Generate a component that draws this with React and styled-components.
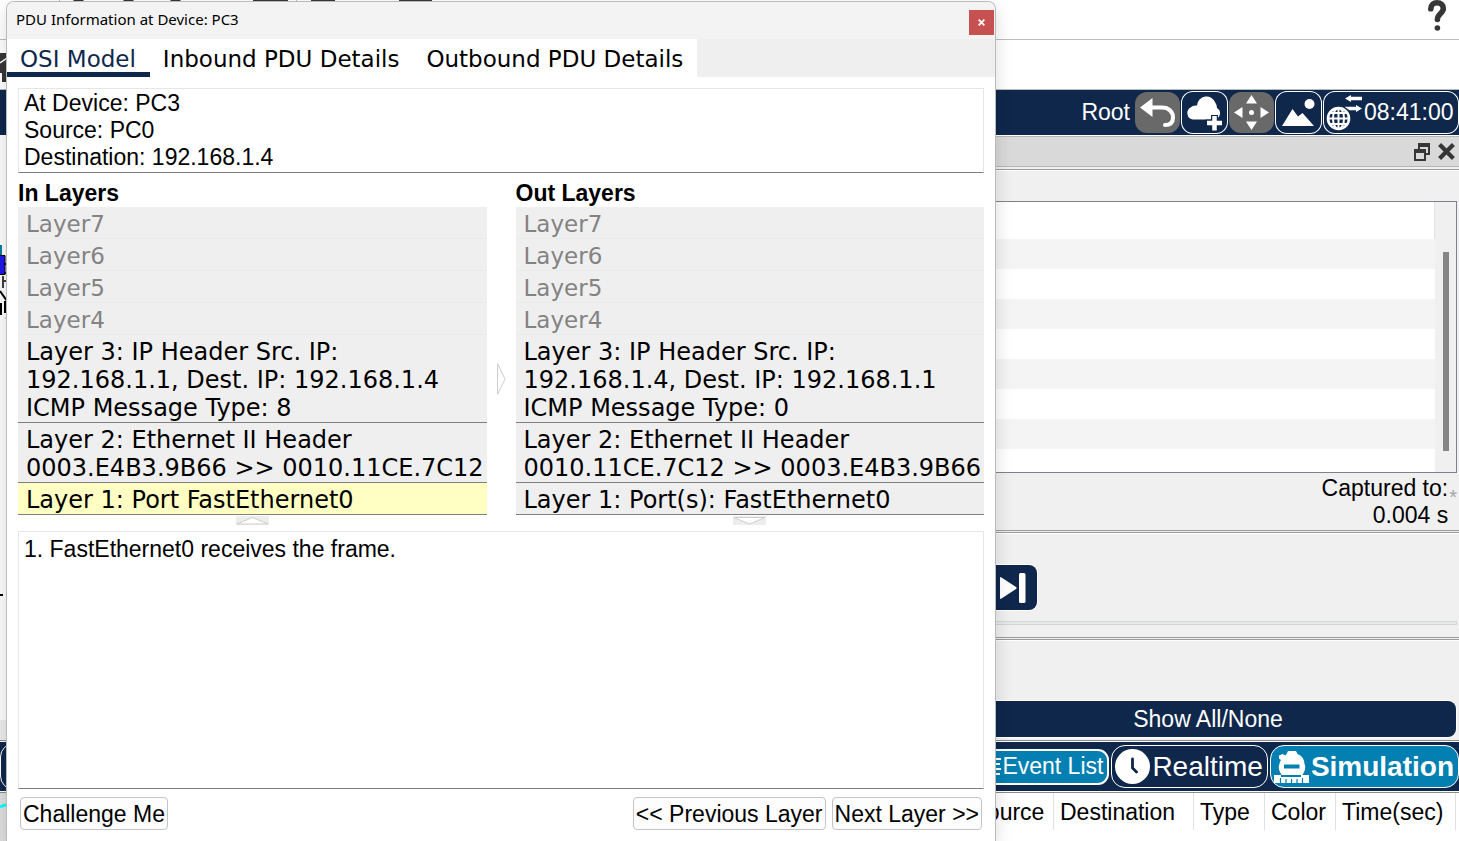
import React from 'react';
import styled, { createGlobalStyle } from 'styled-components';

const navy = '#0f274b';
const teal = '#037fb1';
const ink = '#363636';

const GlobalStyle = createGlobalStyle`
  * { box-sizing: border-box; }
  body { margin: 0; background: #fff; color: #000; font: 23px/27px "Liberation Sans", Arial, sans-serif; }
  button { font: inherit; color: inherit; padding: 0; margin: 0; border: 0; background: none; cursor: pointer; white-space: nowrap; }
  svg { display: block; flex: none; }
`;

/* ---------- main window ---------- */

const Desktop = styled.div`
  position: relative;
  display: flex;
  flex-direction: column;
  min-height: 100vh;
  overflow: hidden;
`;

const MainToolbar = styled.header`
  display: flex;
  align-items: flex-start;
  justify-content: space-between;
  height: 40px;
  padding: 0 12px 0 59px;
  border-bottom: 1px solid #bcbebd;
`;

const SecondToolbar = styled.div`
  height: 50px;
  padding-top: 12px;
  border-bottom: 1px solid #b5bdbb;
`;

const NavBar = styled.nav`
  display: flex;
  align-items: center;
  justify-content: flex-end;
  gap: 1px;
  height: 45px;
  background: ${navy};
  color: #fff;
`;

const NavLabel = styled.span`
  margin-right: 4px;
`;

const NavButton = styled.button`
  display: flex;
  align-items: center;
  justify-content: center;
  height: ${p => (p.$muted ? 41 : 43)}px;
  width: ${p => (p.$muted ? 45 : 47)}px;
  border-radius: 12px;
  background: ${p => (p.$muted ? '#696969' : navy)};
  box-shadow: ${p => (p.$muted ? 'none' : 'inset 0 0 0 1px #fff')};
`;

const ClockButton = styled(NavButton)`
  width: 136px;
  justify-content: flex-start;
`;

const Workspace = styled.div`
  display: flex;
  flex: 1;
`;

const Canvas = styled.main`
  display: flex;
  flex-direction: column;
  flex: 1;
  background: #fcfcfc;
`;

const CanvasDrawing = styled.div`
  flex: 1;
  padding-top: 110px;
`;

const CanvasScroll = styled.div`
  height: 20px;
  background: #ececec;
`;

const SimPanel = styled.aside`
  display: flex;
  flex-direction: column;
  width: 502px;
  background: #f0f0f0;
  border-top: 1px solid #fff;
`;

const PanelTitle = styled.div`
  display: flex;
  align-items: center;
  justify-content: flex-end;
  gap: 8px;
  height: 31px;
  padding-right: 4px;
  background: #d9d9d9;
  border-top: 1px solid #b5b5b5;
  border-bottom: 1px solid #b5b5b5;
`;

const Divider = styled.div`
  height: 4px;
  border-top: 1px solid #9b9b9b;
  border-bottom: 1px solid #fff;
  background: linear-gradient(#f0f0f0 1px, #9b9b9b 1px);
`;

const TitleDivider = styled.div`
  height: 4px;
  border-bottom: 1px solid #fff;
  background: linear-gradient(#f0f0f0 2px, #9b9b9b 2px);
`;

const EventBox = styled.div`
  display: flex;
  height: 272px;
  margin: 30px 2px 0 0;
  border: 1px solid #7d828c;
`;

const EventRows = styled.div`
  flex: 1;
  display: flex;
  flex-direction: column;
  overflow: hidden;
  background: #fff;
`;

const EventHead = styled.div`
  flex: none;
  height: 37px;
  border-right: 1px solid #e2e2e2;
`;

const EventRow = styled.div`
  flex: none;
  height: 30px;
  background: ${p => (p.$odd ? '#f4f4f4' : '#fff')};
`;

const ScrollTrack = styled.div`
  width: 21px;
  padding: 50px 7px 0 8px;
  background: #f0f0f0;
`;

const ScrollThumb = styled.div`
  height: 199px;
  background: #868686;
`;

const Captured = styled.div`
  display: flex;
  justify-content: flex-end;
  align-items: center;
  gap: 1px;
  height: 57px;
  padding: 1px 2px 0 0;
  text-align: right;
`;

const Star = styled.span`
  padding-bottom: 10px;
  color: #a5a5a5;
  font-size: 20px;
  line-height: 20px;
`;

const Controls = styled.div`
  display: flex;
  flex-direction: column;
  height: 103px;
  padding: 31px 2px 0 23px;
`;

const StepButton = styled.button`
  display: flex;
  align-items: center;
  justify-content: flex-end;
  width: 57px;
  height: 45px;
  padding-right: 11px;
  border-radius: 8px;
  background: ${navy};
  box-shadow: 0 0 0 1px #fff;
`;

const ProgressTrack = styled.div`
  height: 4px;
  margin-top: 11px;
  border: 1px solid #d0d6d4;
  background: #e6eae9;
`;

const Filters = styled.div`
  display: flex;
  flex-direction: column;
  justify-content: flex-end;
  flex: 1;
  padding: 0 3px 3px;
`;

const ShowAll = styled.button`
  height: 36px;
  border-radius: 8px;
  background: ${navy};
  color: #fff;
  box-shadow: 0 0 0 1px #fff;
`;

const ModeBar = styled.div`
  display: flex;
  align-items: center;
  justify-content: flex-end;
  gap: 2px;
  height: 53px;
  border-top: 1px solid #8c8c8c;
  border-bottom: 1px solid #8c8c8c;
  background: ${navy};
  box-shadow: inset 0 1px #fff, inset 0 -1px #fff;
  color: #fff;
`;

const ModeButton = styled.button`
  display: flex;
  align-items: center;
  gap: 2px;
  height: 43px;
  padding: 0 4px 0 3px;
  border: 1px solid #fff;
  border-radius: 14px;
  background: ${p => (p.$active ? teal : navy)};
  font-size: 28px;
  font-weight: ${p => (p.$active ? 'bold' : 'normal')};
  line-height: 36px;
`;

const TimeButton = styled(ModeButton)`
  width: 120px;
  height: 47px;
  margin-right: auto;
`;

const EventListButton = styled.button`
  display: flex;
  align-items: center;
  gap: 1px;
  height: 36px;
  padding: 0 4px;
  border: 2px solid #fff;
  border-radius: 11px;
  background: ${teal};
`;

const PduArea = styled.div`
  display: flex;
  justify-content: space-between;
  height: 48px;
  background: linear-gradient(90deg, #dedede 10px, #fff 10px);
`;

const PduTable = styled.table`
  height: 37px;
  width: 490px;
  table-layout: fixed;
  border-collapse: collapse;
  margin-right: 3px;
  th {
    padding: 1px 0 0 6px;
    height: 37px;
    font-weight: normal;
    text-align: left;
    border-right: 1px solid #e0e0e0;
  }
`;

const HeadCell = styled.th`
  width: ${p => p.$w}px;
`;

/* ---------- dialog ---------- */

const Dialog = styled.section`
  position: absolute;
  top: 1px;
  bottom: 0;
  left: 6px;
  right: 463px;
  display: flex;
  flex-direction: column;
  border: 1px solid #b9bbba;
  border-bottom: 0;
  border-radius: 8px 8px 0 0;
  background: #fff;
  box-shadow: 0 6px 18px rgba(0, 0, 0, 0.14);
`;

const TitleBar = styled.header`
  display: flex;
  align-items: center;
  justify-content: space-between;
  height: 37px;
  padding: 0 1px 0 9px;
  border-radius: 7px 7px 0 0;
  background: #f3f3f3;
`;

const DialogTitle = styled.h1`
  margin: 0;
  padding-bottom: 3px;
  font: 15px/20px "Noto Sans", "Open Sans", sans-serif;
`;

const CloseButton = styled.button`
  display: flex;
  align-items: center;
  justify-content: center;
  width: 25px;
  height: 25px;
  margin-top: 3px;
  background: #c75050;
`;

const Tabs = styled.div`
  display: flex;
  height: 38px;
  background: #efefef;
`;

const Tab = styled.button`
  height: 38px;
  padding: 7px 14px 0 13px;
  background: #fff;
  border-bottom: 5px solid ${p => (p.$active ? navy : '#fff')};
  color: ${p => (p.$active ? navy : '#000')};
  font: 23px/26px "DejaVu Sans", Verdana, sans-serif;
`;

const DialogBody = styled.div`
  display: flex;
  flex-direction: column;
  flex: 1;
  padding: 11px;
`;

const TextPanel = styled.div`
  flex: ${p => (p.$grow ? 1 : 'none')};
  padding: ${p => (p.$grow ? 4 : 1)}px 5px;
  border: 1px solid #e6e6e6;
  border-bottom-color: #7f7f7f;
`;

const LayerGrid = styled.div`
  display: grid;
  grid-template-columns: 1fr 29px 1fr;
  padding-top: 7px;
`;

const LayerHeading = styled.h2`
  margin: 0;
  font-size: 23px;
  line-height: 27px;
`;

const LayerButton = styled.button`
  display: block;
  width: 100%;
  padding: 3px 0 0 8px;
  border-bottom: 1px solid ${p => (p.disabled ? '#eaeaea' : '#7f7f7f')};
  background: ${p => (p.$selected ? '#ffffc3' : '#efefef')};
  color: ${p => (p.disabled ? '#838383' : '#000')};
  font: ${p => (p.disabled ? 23 : 24)}px/28px "DejaVu Sans", Verdana, sans-serif;
  text-align: left;
  white-space: pre;
`;

const ArrowCell = styled.div`
  display: flex;
  align-items: center;
  justify-content: center;
  padding-top: 47px;
`;

const Handle = styled.div`
  display: flex;
  justify-content: center;
  height: 16px;
  padding-top: 1px;
`;

const Footer = styled.footer`
  display: flex;
  gap: 6px;
  padding: 8px 2px 0;
`;

const DialogButton = styled.button`
  height: 33px;
  padding: 1px 2px 0;
  margin-right: ${p => (p.$push ? 'auto' : '0')};
  border: 1px solid #c4c4c4;
  border-radius: 4px;
  background: #fdfdfd;
`;

/* ---------- icons ---------- */

const ToolbarIcons = () => (
  <svg width="400" height="2" viewBox="59 0 400 2" aria-hidden="true">
    <g fill={ink}>
      <path d="M74 0h9l2 2H72zM124 0h9l2 2h-13zM171 0h9l2 2h-13z" />
      <path d="M253 0h35v2h-35zM311 0h24v2h-24zM399 0h33v2h-33z" />
      <path d="M59 0h1v2h-1zM296 0h1v2h-1z" fill="#bbb" />
    </g>
  </svg>
);

const HelpIcon = () => (
  <svg width="20" height="32" viewBox="0 0 20 32" fill="none" stroke={ink} strokeWidth="5.6" aria-hidden="true">
    <path d="M3.800 8.800C4 5 6.600 2.800 10 2.800C13.800 2.800 16.300 5.200 16.300 8.500C16.300 13.500 10.400 13.500 10.400 19.500" strokeLinecap="round" />
    <circle cx="10.400" cy="28" r="2.800" fill={ink} stroke="none" />
  </svg>
);

const SelectToolIcon = () => (
  <svg width="7" height="31" viewBox="0 0 7 31" aria-hidden="true">
    <path d="M0 1h7v29H2v-9H0z" fill={ink} />
    <path d="M0 11l7-5" stroke="#fff" strokeWidth="1.500" />
  </svg>
);

const UndoIcon = () => (
  <svg width="45" height="41" viewBox="0 0 45 41" aria-hidden="true">
    <path d="M5 15.500L17.500 6v19z" fill="#fff" />
    <path d="M16 15.500H27C34 15.500 38 20 38 25.500C38 30.500 35 33 30 33" fill="none" stroke="#fff" strokeWidth="4" strokeLinecap="round" />
  </svg>
);

const CloudIcon = () => (
  <svg width="47" height="43" viewBox="0 0 47 43" fill="#fff" aria-hidden="true">
    <path d="M12 28.500A6.500 6.500 0 0 1 9.500 16.500Q12 14 16 14.500A9.500 9.500 0 0 1 34.500 12Q36 14 36 17Q39.500 19 39 23Q38 28 33 28.500z" />
    <path d="M33.500 24v17M24.500 32h18" stroke={navy} strokeWidth="7" />
    <path d="M33.500 25v14.500M26 32h15" stroke="#fff" strokeWidth="4.500" />
  </svg>
);

const MoveIcon = () => (
  <svg width="45" height="41" viewBox="0 0 45 41" fill="#fff" aria-hidden="true">
    <path d="M22.500 3l5.500 8.500H17zM22.500 38l5.500-8.500H17zM5 20.500l8.500-5.500v11zM40 20.500l-8.500-5.500v11z" />
    <circle cx="22.500" cy="20.500" r="2.500" />
  </svg>
);

const ImageIcon = () => (
  <svg width="47" height="43" viewBox="0 0 47 43" fill="#fff" aria-hidden="true">
    <path d="M7 35L17.500 18L23 25.500L27.500 22L39 35z" />
    <circle cx="34.500" cy="13" r="5" />
  </svg>
);

const GlobeIcon = () => (
  <svg width="41" height="43" viewBox="0 0 41 43" aria-hidden="true">
    <circle cx="15.500" cy="27.500" r="10.500" fill="none" stroke="#fff" strokeWidth="2.600" />
    <g fill="none" stroke="#fff" strokeWidth="2">
      <path d="M7 22h17M5 27.500h21M7 33h17M15.500 17v21" />
      <ellipse cx="15.500" cy="27.500" rx="5.500" ry="10.500" />
    </g>
    <path d="M22 7.500L28 4v1.700h11v3.600H28V11zM39 17.500L33 14v1.700H21.500l5 3.600H33V21z" fill="#fff" />
  </svg>
);

const RestoreIcon = () => (
  <svg width="16" height="18" viewBox="0 0 16 18" fill="none" stroke={ink} aria-hidden="true">
    <path d="M5 6V1h10v10H12M1 8h10v9H1z" strokeWidth="2" />
    <path d="M4 2h12M0 8h12" strokeWidth="4" />
  </svg>
);

const CrossIcon = ({ size, width, color }) => (
  <svg width={size} height={size} viewBox="0 0 16 16" aria-hidden="true">
    <path d="M1.500 1.500l13 13M14.500 1.500l-13 13" stroke={color} strokeWidth={width} />
  </svg>
);

const StepIcon = () => (
  <svg width="29" height="32" viewBox="0 0 29 32" fill="#fff" aria-hidden="true">
    <path d="M3 6q0-1.500 1.500-.5L19 15q1.500 1 0 2L4.500 26.500q-1.500 1-1.500-.5z" />
    <rect x="22" y="1" width="6.500" height="30" rx="1.500" />
  </svg>
);

const ListIcon = () => (
  <svg width="22" height="22" viewBox="0 0 22 22" stroke="#fff" strokeWidth="2" aria-hidden="true">
    <path d="M1 3h3M7 3h15M1 8h3M7 8h14M1 13h3M7 13h15M1 18h3M7 18h14" />
  </svg>
);

const RealtimeIcon = () => (
  <svg width="35" height="35" viewBox="0 0 35 35" aria-hidden="true">
    <circle cx="17.500" cy="17.500" r="17.500" fill="#fff" />
    <path d="M17.500 10v9l4 4" fill="none" stroke={navy} strokeWidth="2.800" strokeLinecap="round" />
  </svg>
);

const SimulationIcon = () => (
  <svg width="35" height="32" viewBox="0 0 35 32" fill="#fff" aria-hidden="true">
    <path d="M14 0h8l1.500 3Q30 5.500 30.500 13q1.500 3 0 7l-2 4H7.500l-2-4q-1.500-4 0-7Q5.500 11 7 9L5 7.500V4.500L8.500 3l3 1.500L12.500 3z" />
    <path d="M0 24h7v2h20v-2h8v8H0z" />
    <path d="M10 13.500h15.500v4H10z" fill={teal} />
    <path d="M6.500 27v5M12 28v4M17.500 28v4M23 28v4M28.500 27v5" stroke={teal} strokeWidth="1.200" />
  </svg>
);

const CanvasIcon = () => (
  <svg width="7" height="355" viewBox="0 245 7 355" aria-hidden="true">
    <path d="M0 245h2v10H0z" fill="#047d9c" />
    <path d="M-1 255.500h6v19h-6z" fill="#2018ea" stroke="#000" />
    <path d="M4 264h3M4 273h3M4 281h3M3 276v12" stroke="#000" strokeWidth="1.500" fill="none" />
    <path d="M0 291l7 10M1 303v12M5 301v12" stroke="#000" strokeWidth="2" fill="none" />
    <path d="M5 318h2" stroke="#74b86a" />
    <path d="M0 595h3" stroke="#000" strokeWidth="2" />
  </svg>
);

const RightArrow = () => (
  <svg width="10" height="34" viewBox="0 0 10 34" fill="#fff" stroke="#cfcfcf" aria-hidden="true">
    <path d="M1.500 1.500v31L9 17z" />
  </svg>
);

const HandleIcon = ({ down }) => (
  <svg width="33" height="9" viewBox="0 0 33 9" aria-hidden="true">
    <path d="M0 0h33v9H0z" fill="#ededed" />
    <path d={down ? 'M1 1.500h31L16.500 8z' : 'M1 8h31L16.500 1.500z'} fill="#fff" stroke="#cfcfcf" />
  </svg>
);

const BottomStroke = () => (
  <svg width="7" height="20" viewBox="0 0 7 20" aria-hidden="true">
    <path d="M0 14q3-2 7-2" stroke="#0ff" strokeWidth="3" fill="none" />
  </svg>
);

/* ---------- data ---------- */

const upper = ['Layer7', 'Layer6', 'Layer5', 'Layer4'];

const inLayers = [
  'Layer 3: IP Header Src. IP:\n192.168.1.1, Dest. IP: 192.168.1.4\nICMP Message Type: 8',
  'Layer 2: Ethernet II Header\n0003.E4B3.9B66 >> 0010.11CE.7C12',
  'Layer 1: Port FastEthernet0',
];

const outLayers = [
  'Layer 3: IP Header Src. IP:\n192.168.1.4, Dest. IP: 192.168.1.1\nICMP Message Type: 0',
  'Layer 2: Ethernet II Header\n0010.11CE.7C12 >> 0003.E4B3.9B66',
  'Layer 1: Port(s): FastEthernet0',
];

const LayerColumn = ({ title, layers, selected, down }) => (
  <div>
    <LayerHeading>{title}</LayerHeading>
    {upper.map(name => <LayerButton key={name} disabled>{name}</LayerButton>)}
    {layers.map((text, i) => <LayerButton key={text} $selected={i === selected}>{text}</LayerButton>)}
    <Handle><HandleIcon down={down} /></Handle>
  </div>
);

export default function App() {
  return (
    <Desktop>
      <GlobalStyle />
      <MainToolbar>
        <ToolbarIcons />
        <button aria-label="Help"><HelpIcon /></button>
      </MainToolbar>
      <SecondToolbar><SelectToolIcon /></SecondToolbar>
      <NavBar>
        <NavLabel>Root</NavLabel>
        <NavButton $muted aria-label="Back"><UndoIcon /></NavButton>
        <NavButton aria-label="New cluster"><CloudIcon /></NavButton>
        <NavButton $muted aria-label="Move object"><MoveIcon /></NavButton>
        <NavButton aria-label="Set background"><ImageIcon /></NavButton>
        <ClockButton><GlobeIcon />08:41:00</ClockButton>
      </NavBar>
      <Workspace>
        <Canvas>
          <CanvasDrawing><CanvasIcon /></CanvasDrawing>
          <CanvasScroll />
        </Canvas>
        <SimPanel>
          <PanelTitle>
            <button aria-label="Undock"><RestoreIcon /></button>
            <button aria-label="Close panel"><CrossIcon size={17} width={4} color={ink} /></button>
          </PanelTitle>
          <TitleDivider />
          <EventBox>
            <EventRows>
              <EventHead />
              {[1, 2, 3, 4, 5, 6, 7, 8].map(n => <EventRow key={n} $odd={n % 2 === 1} />)}
            </EventRows>
            <ScrollTrack><ScrollThumb /></ScrollTrack>
          </EventBox>
          <Captured>
            <span>Captured to:<br />0.004 s</span>
            <Star>*</Star>
          </Captured>
          <Divider />
          <Controls>
            <StepButton aria-label="Capture then forward"><StepIcon /></StepButton>
            <ProgressTrack />
          </Controls>
          <Divider />
          <Filters><ShowAll>Show All/None</ShowAll></Filters>
        </SimPanel>
      </Workspace>
      <ModeBar>
        <TimeButton aria-label="Time" />
        <EventListButton><ListIcon />Event List</EventListButton>
        <ModeButton><RealtimeIcon />Realtime</ModeButton>
        <ModeButton $active><SimulationIcon />Simulation</ModeButton>
      </ModeBar>
      <PduArea>
        <BottomStroke />
        <PduTable>
          <thead>
            <tr>
              <HeadCell $w={88}>Source</HeadCell>
              <HeadCell $w={140}>Destination</HeadCell>
              <HeadCell $w={71}>Type</HeadCell>
              <HeadCell $w={71}>Color</HeadCell>
              <HeadCell $w={120}>Time(sec)</HeadCell>
            </tr>
          </thead>
        </PduTable>
      </PduArea>

      <Dialog role="dialog" aria-label="PDU Information">
        <TitleBar>
          <DialogTitle>PDU Information at Device: PC3</DialogTitle>
          <CloseButton aria-label="Close"><CrossIcon size={7} width={4} color="#fff" /></CloseButton>
        </TitleBar>
        <Tabs role="tablist">
          <Tab role="tab" aria-selected="true" $active>OSI Model</Tab>
          <Tab role="tab">Inbound PDU Details</Tab>
          <Tab role="tab">Outbound PDU Details</Tab>
        </Tabs>
        <DialogBody>
          <TextPanel>At Device: PC3<br />Source: PC0<br />Destination: 192.168.1.4</TextPanel>
          <LayerGrid>
            <LayerColumn title="In Layers" layers={inLayers} selected={2} />
            <ArrowCell><RightArrow /></ArrowCell>
            <LayerColumn title="Out Layers" layers={outLayers} down />
          </LayerGrid>
          <TextPanel $grow>1. FastEthernet0 receives the frame.</TextPanel>
          <Footer>
            <DialogButton $push>Challenge Me</DialogButton>
            <DialogButton>&lt;&lt; Previous Layer</DialogButton>
            <DialogButton>Next Layer &gt;&gt;</DialogButton>
          </Footer>
        </DialogBody>
      </Dialog>
    </Desktop>
  );
}
